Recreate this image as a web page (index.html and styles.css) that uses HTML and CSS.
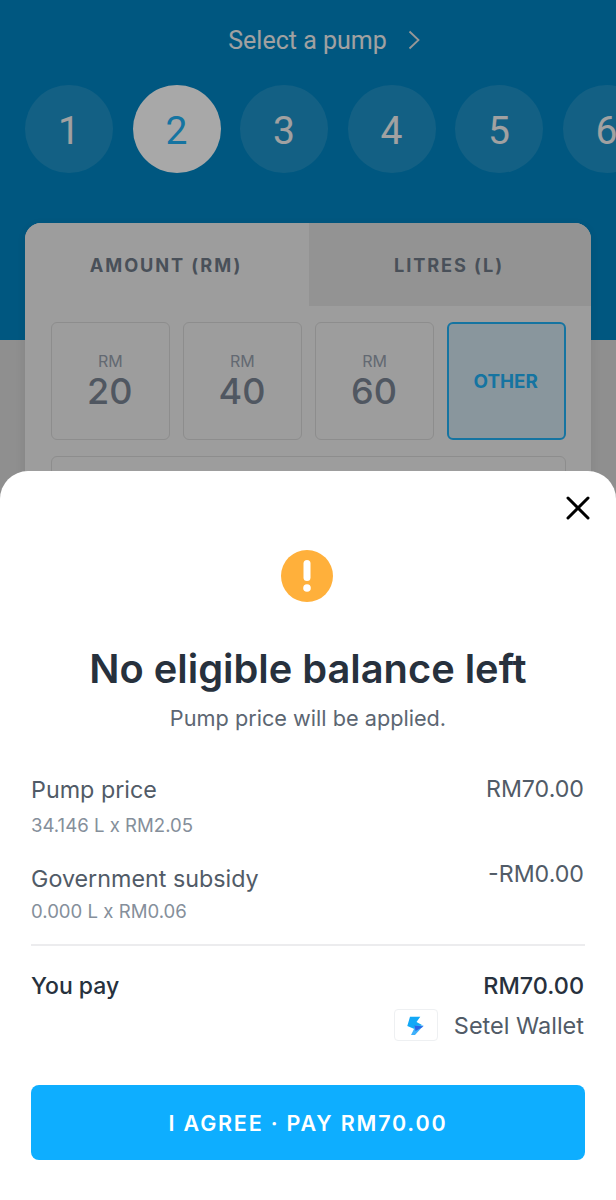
FILE: index.html
```html
<!DOCTYPE html>
<html lang="en">
<head>
  <meta charset="UTF-8">
  <meta name="viewport" content="width=device-width, initial-scale=1.0">
  <title>Select a pump</title>
  <link rel="stylesheet" href="styles.css">
</head>
<body>
  <div class="hero">
    <div class="hero-title">
      <span>Select a pump</span>
      <svg class="chevron" width="12" height="20" viewBox="0 0 12 20" aria-hidden="true">
        <path d="M1.5 1.5 10.5 10l-9 8.5" fill="none" stroke="currentColor" stroke-width="1.8"/>
      </svg>
    </div>

    <div class="pumps">
      <div class="pump">1</div>
      <div class="pump active">2</div>
      <div class="pump">3</div>
      <div class="pump">4</div>
      <div class="pump">5</div>
      <div class="pump">6</div>
    </div>

    <div class="card">
      <div class="tabs">
        <div class="tab active">AMOUNT (RM)</div>
        <div class="tab">LITRES (L)</div>
      </div>
      <div class="tiles">
        <div class="tile"><span class="tile-unit">RM</span><span class="tile-value">20</span></div>
        <div class="tile"><span class="tile-unit">RM</span><span class="tile-value">40</span></div>
        <div class="tile"><span class="tile-unit">RM</span><span class="tile-value">60</span></div>
        <div class="tile other">OTHER</div>
      </div>
      <div class="amount-input"></div>
    </div>
  </div>

  <div class="scrim"></div>

  <div class="sheet">
    <div class="sheet-close">
      <svg width="24" height="24" viewBox="0 0 24 24" aria-hidden="true">
        <path d="M2 2 22 22M22 2 2 22" fill="none" stroke="#000" stroke-width="3" stroke-linecap="round"/>
      </svg>
    </div>

    <svg class="warning" width="52" height="52" viewBox="0 0 52 52" aria-hidden="true">
      <circle cx="26" cy="26" r="26" fill="#ffb03b"/>
      <rect x="22.5" y="10" width="7" height="21" rx="3.5" fill="#fff"/>
      <circle cx="26" cy="38" r="3.8" fill="#fff"/>
    </svg>

    <h1 class="sheet-title">No eligible balance left</h1>
    <p class="sheet-note">Pump price will be applied.</p>

    <div class="line first">
      <div>
        <div class="line-label">Pump price</div>
        <div class="line-sub">34.146 L x RM2.05</div>
      </div>
      <div class="line-amount">RM70.00</div>
    </div>
    <div class="line second">
      <div>
        <div class="line-label">Government subsidy</div>
        <div class="line-sub">0.000 L x RM0.06</div>
      </div>
      <div class="line-amount">-RM0.00</div>
    </div>

    <div class="total">
      <div class="total-row">
        <span>You pay</span>
        <span class="total-amount">RM70.00</span>
      </div>
      <div class="wallet">
        <span class="wallet-badge">
          <svg width="17" height="19" viewBox="0 0 17 19" aria-hidden="true">
            <path d="M3 .7H13.300L9.500 6 15 9 8 13.300.3 10z" fill="#12a8f6"/>
            <path d="M8 9.500H16.600L8 19H4L7 13z" fill="#3fb1fa"/>
            <path d="M7.500 9.500 16.600 10.500 8.500 15z" fill="#2b63e6"/>
          </svg>
        </span>
        <span>Setel Wallet</span>
      </div>
    </div>

    <button class="pay-btn">I AGREE · PAY RM70.00</button>
  </div>
</body>
</html>
```

FILE: styles.css
```css
* {
  box-sizing: border-box;
}

body {
  width: 616px;
  height: 1200px;
  margin: 0;
  overflow: hidden;
  position: relative;
  background: #d9d9d9;
  font-family: Inter, 'Liberation Sans', sans-serif;
}

/* Pump selection behind the sheet */
.hero {
  height: 340px;
  padding-top: 25px;
  background: #0085c3;
}

.hero-title {
  display: flex;
  justify-content: center;
  align-items: center;
  gap: 21px;
  height: 30px;
  padding-left: 32px;
  font-family: Roboto, sans-serif;
  font-size: 25px;
  color: #f4f4f4;
}

.chevron {
  color: #e6e6e6;
}

.pumps {
  display: flex;
  gap: 19.5px;
  margin-top: 30px;
  padding-left: 25px;
  width: 616px;
  overflow: hidden;
}

.pump {
  flex: 0 0 88px;
  height: 88px;
  padding-top: 3px;
  border-radius: 50%;
  display: flex;
  align-items: center;
  justify-content: center;
  background: #1e92c8;
  font-family: Roboto, sans-serif;
  font-size: 39px;
  color: #f4f4f4;
}

.pump.active {
  background: #fff;
  color: #20b0f5;
}

.card {
  margin: 50px 25px 0;
  height: 400px;
  background: #eeeeee;
  border-radius: 16px;
  box-shadow: 0 2px 12px rgba(0, 0, 0, 0.08);
  overflow: hidden;
}

.tabs {
  display: flex;
  height: 83px;
}

.tab {
  flex: 1;
  padding: 31px 2px 0 0;
  text-align: center;
  font-size: 18.2px;
  font-weight: 700;
  letter-spacing: 1.9px;
  color: #6f7a88;
  background: #e0e0e0;
}

.tab.active {
  flex: 0 0 284px;
  background: #eeeeee;
}

.tiles {
  display: grid;
  grid-template-columns: repeat(4, 1fr);
  gap: 13.5px;
  margin: 16px 25px 0 26px;
}

.tile {
  height: 118px;
  border: 1.500px solid #d6d6d6;
  border-radius: 6px;
  display: flex;
  flex-direction: column;
  align-items: center;
  justify-content: center;
  color: #7a8593;
}

.tile-unit {
  font-size: 16px;
  line-height: 20px;
  color: #96a0ad;
}

.tile-value {
  padding-right: 1px;
  font-size: 36px;
  line-height: 40px;
  font-weight: 450;
}

.tile.other {
  padding-right: 2px;
  background: #d0e4ef;
  border: 2px solid #20b0f5;
  font-size: 18.8px;
  font-weight: 700;
  color: #20b0f5;
}

.amount-input {
  height: 60px;
  margin: 16px 25px 0 26px;
  border: 1.500px solid #d6d6d6;
  border-radius: 6px;
}

.scrim {
  position: absolute;
  inset: 0;
  background: rgba(0, 0, 0, 0.34);
}

/* Bottom sheet */
.sheet {
  position: absolute;
  left: 0;
  right: 0;
  top: 471px;
  bottom: 0;
  padding: 0 31px;
  background: #fff;
  border-radius: 28px 28px 0 0;
  display: flex;
  flex-direction: column;
}

.sheet-close {
  position: absolute;
  top: 25px;
  right: 26px;
  line-height: 0;
}

.warning {
  align-self: center;
  margin-top: 79px;
  margin-right: 2px;
}

.sheet-title {
  margin: 41px 0 0;
  height: 52px;
  text-align: center;
  font-size: 39.8px;
  line-height: 52px;
  font-weight: 600;
  color: #27313d;
}

.sheet-note {
  margin: 9px 0 0;
  text-align: center;
  font-size: 21.7px;
  line-height: 28px;
  color: #5c6672;
}

.line {
  display: flex;
  justify-content: space-between;
  padding-right: 1px;
}

.line.first {
  margin-top: 43px;
  height: 64px;
}

.line.second {
  margin-top: 25px;
  height: 60px;
}

.line.second .line-amount {
  margin-top: -4px;
}

.line-label {
  font-size: 23.3px;
  line-height: 30px;
  color: #515b67;
}

.line-sub {
  margin-top: 5px;
  font-size: 18.6px;
  line-height: 24px;
  color: #858f9b;
}

.line.first .line-sub {
  margin-top: 8px;
}

.line-amount {
  font-size: 23.2px;
  line-height: 28px;
  color: #515b67;
}

.total {
  margin-top: 20px;
  padding-top: 25px;
  border-top: 2px solid #ececee;
}

.total-row {
  display: flex;
  justify-content: space-between;
  padding-right: 1px;
  font-size: 23px;
  line-height: 30px;
  font-weight: 500;
  color: #27313d;
}

.total-amount {
  font-size: 23.4px;
}

.wallet {
  display: flex;
  justify-content: flex-end;
  align-items: center;
  gap: 16px;
  margin-top: 8px;
  padding-right: 1px;
  font-size: 23.5px;
  color: #515b67;
}

.wallet-badge {
  width: 44px;
  height: 32px;
  border: 1px solid #eef0f2;
  border-radius: 4px;
  display: flex;
  align-items: center;
  justify-content: center;
}

.pay-btn {
  margin-top: 44px;
  height: 75px;
  border: none;
  border-radius: 8px;
  background: #0eaeff;
  font-family: Inter, sans-serif;
  font-size: 21.5px;
  font-weight: 600;
  letter-spacing: 1.8px;
  color: #fff;
}
```
